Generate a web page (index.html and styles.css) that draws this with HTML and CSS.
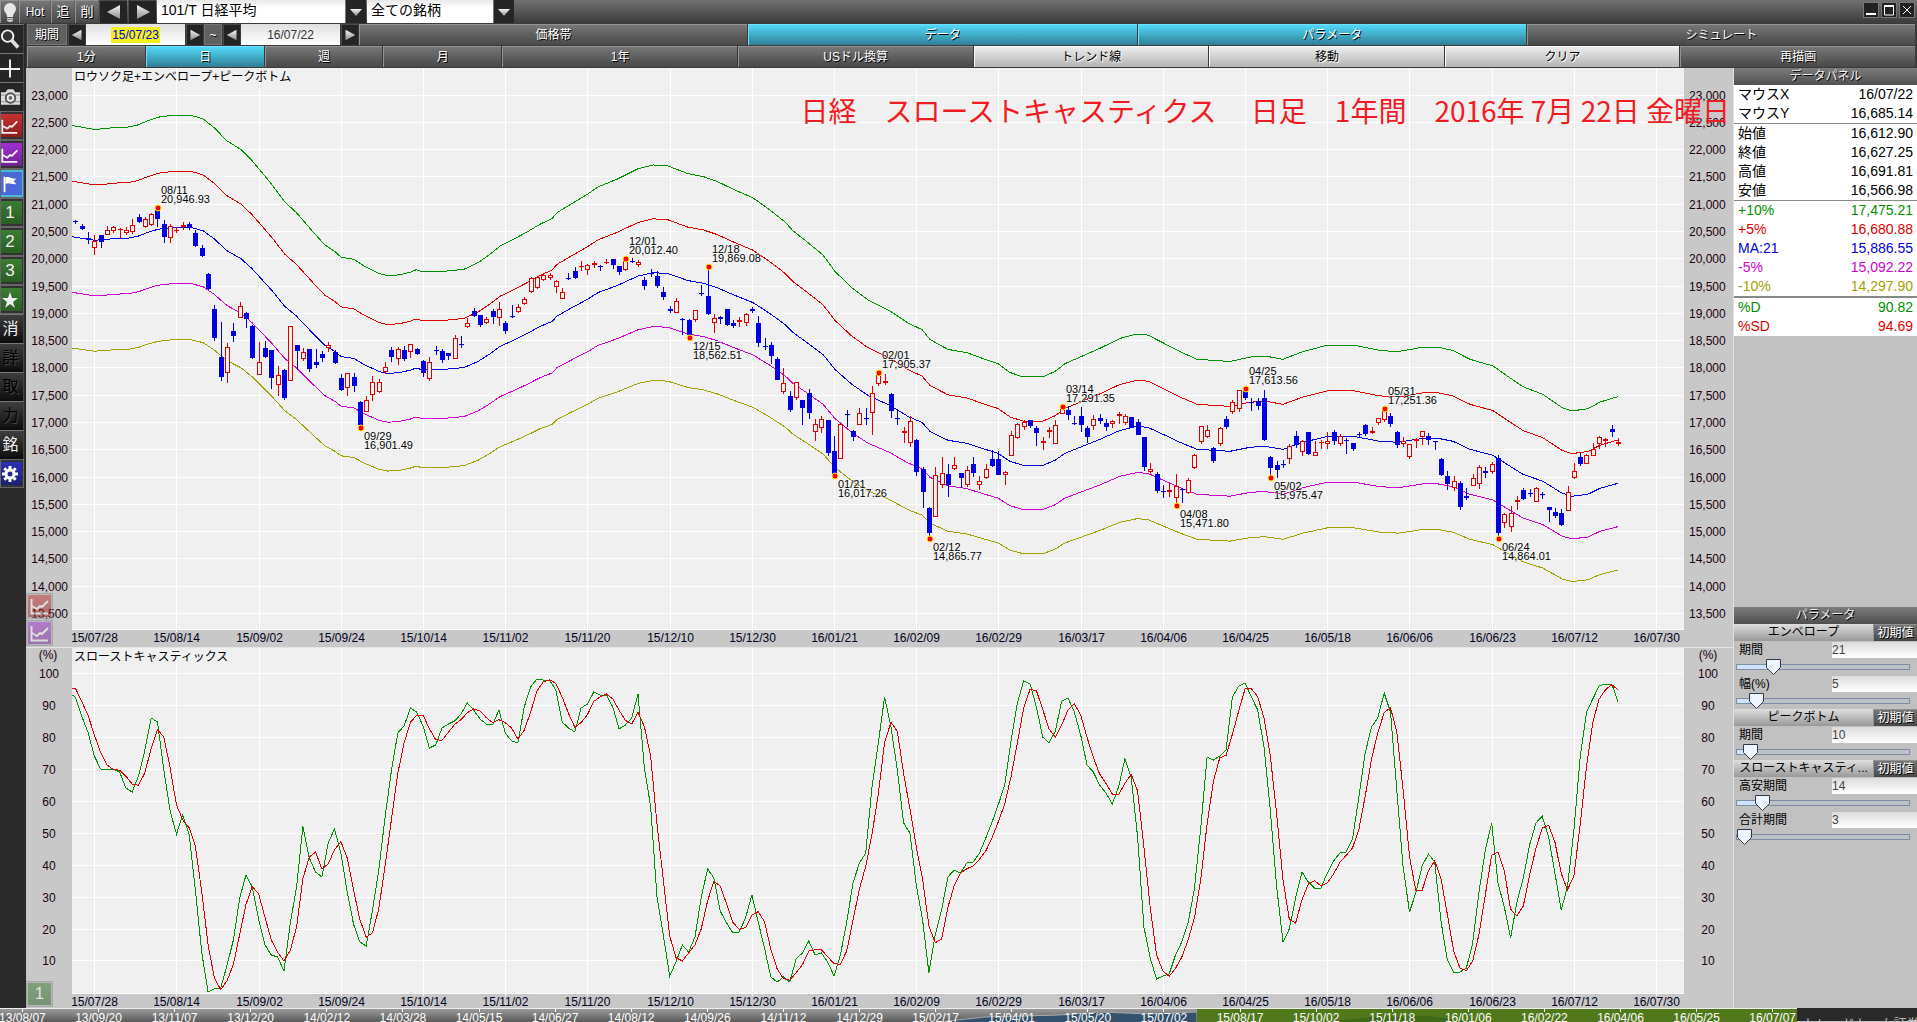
FILE: index.html
```html
<!DOCTYPE html>
<html lang="ja">
<head>
    <meta charset="UTF-8">
    <meta name="viewport" content="width=device-width, initial-scale=1.0">
    <title>101/T 日経平均</title>
    <link rel="stylesheet" href="styles.css">
</head>
<body>

    <!-- shared icon shapes -->
    <svg class="defs" width="0" height="0" aria-hidden="true">
        <defs>
            <linearGradient id="metal" x1="0" y1="0" x2="0" y2="1">
                <stop offset="0" stop-color="#f4f4f4"/>
                <stop offset="1" stop-color="#8c8c8c"/>
            </linearGradient>
            <symbol id="left" viewBox="0 0 16 16"><path d="M14 1v14L1 8z" fill="url(#metal)"/></symbol>
            <symbol id="right" viewBox="0 0 16 16"><path d="M2 1v14L15 8z" fill="url(#metal)"/></symbol>
            <symbol id="line" viewBox="0 0 22 22">
                <path d="M2.500 4v14.500H19" fill="none" stroke="#f2f2f2" stroke-width="2"/>
                <path d="M3 11l5 3 3-3 2 1 6-6" fill="none" stroke="#f2f2f2" stroke-width="2"/>
            </symbol>
        </defs>
    </svg>

    <header class="topbar">
        <button class="btn bulb" aria-label="ヒント">
            <svg width="16" height="22" viewBox="0 0 16 22"><path d="M8 2a6 6 0 0 0-6 6c0 3 3 4 3 8h6c0-4 3-5 3-8a6 6 0 0 0-6-6z" fill="#e6e6e6"/><path d="M5 17h6v3l-2 1H7l-2-1z" fill="#c9c9c9"/><path d="M5 18.500h6" stroke="#888"/></svg>
        </button>
        <button class="btn hot">Hot</button>
        <button class="btn kanji">追</button>
        <button class="btn kanji">削</button>
        <button class="btn dark nav" aria-label="前の銘柄"><svg width="16" height="16"><use href="#left"/></svg></button>
        <button class="btn dark nav" aria-label="次の銘柄"><svg width="16" height="16"><use href="#right"/></svg></button>
        <div class="combo symbol">
            <select aria-label="銘柄"><option>101/T 日経平均</option></select>
            <span class="arrow"><svg width="12" height="8" viewBox="0 0 12 8"><path d="M0 1h12L6 8z" fill="url(#metal)"/></svg></span>
        </div>
        <div class="combo group">
            <select aria-label="グループ"><option>全ての銘柄</option></select>
            <span class="arrow"><svg width="12" height="8" viewBox="0 0 12 8"><path d="M0 1h12L6 8z" fill="url(#metal)"/></svg></span>
        </div>
        <div class="window-buttons">
            <button aria-label="最小化"><svg width="14" height="14"><path d="M2 11h10" stroke="#fff" stroke-width="2"/></svg></button>
            <button aria-label="最大化"><svg width="14" height="14"><path d="M2.500 3v9h9V3z" fill="none" stroke="#fff"/><path d="M2 3h10" stroke="#fff" stroke-width="2"/></svg></button>
            <button aria-label="閉じる"><svg width="14" height="14"><path d="M3 3l8 8M11 3l-8 8" stroke="#fff"/></svg></button>
        </div>
    </header>

    <div class="app">
        <nav class="sidebar">
            <button aria-label="検索"><svg width="22" height="24" viewBox="0 0 22 24"><circle cx="8" cy="9" r="6" fill="#333" stroke="#eee" stroke-width="2"/><path d="M12 13l7 8" stroke="#ddd" stroke-width="4"/></svg></button>
            <button aria-label="十字線"><svg width="22" height="24" viewBox="0 0 22 24"><path d="M10.500 3v19M0 13h21" stroke="#f4f4f4" stroke-width="2"/></svg></button>
            <button aria-label="カメラ"><svg width="22" height="24" viewBox="0 0 22 24"><path d="M1 7h5l2-3h6l2 3h5v13H1z" fill="#ddd"/><path d="M1 10h20M1 17h20" stroke="#888"/><circle cx="11" cy="13" r="5" fill="#eee" stroke="#555" stroke-width="2"/><circle cx="11" cy="13" r="2" fill="#666"/></svg></button>
            <button class="tile red" aria-label="チャート1"><svg width="22" height="22"><use href="#line"/></svg></button>
            <button class="tile purple" aria-label="チャート2"><svg width="22" height="22"><use href="#line"/></svg></button>
            <button class="tile flag" aria-label="フラグ"><svg width="22" height="22" viewBox="0 0 22 22"><path d="M5 3v17" stroke="#fff" stroke-width="2"/><path d="M6 4c4-2 6 2 12 1l-3 3 3 3c-5 1-8-2-12 0z" fill="#fff"/></svg></button>
            <button class="tile green">1</button>
            <button class="tile green">2</button>
            <button class="tile green">3</button>
            <button class="tile green" aria-label="お気に入り"><svg width="18" height="18" viewBox="0 0 18 18"><path d="M9 1l2 6h6l-5 4 2 6-5-4-5 4 2-6-5-4h6z" fill="#eee"/></svg></button>
            <button class="char">消</button>
            <button class="char" disabled>詳</button>
            <button class="char" disabled>取</button>
            <button class="char" disabled>力</button>
            <button class="char">銘</button>
            <button class="tile navy" aria-label="設定"><svg width="20" height="20" viewBox="0 0 20 20"><circle cx="10" cy="10" r="4" fill="none" stroke="#fff" stroke-width="3"/><path d="M10 2v3M10 15v3M2 10h3M15 10h3M4.300 4.300l2 2M13.700 13.700l2 2M15.700 4.300l-2 2M6.300 13.700l-2 2" stroke="#fff" stroke-width="3"/></svg></button>
        </nav>

        <div class="main">
            <div class="bar">
                <span class="caption">期間</span>
                <button class="btn dark step" aria-label="開始日を戻す"><svg width="12" height="12"><use href="#left"/></svg></button>
                <div class="date selected"><input type="text" size="8" value="15/07/23" aria-label="開始日"></div>
                <button class="btn dark step" aria-label="開始日を進める"><svg width="12" height="12"><use href="#right"/></svg></button>
                <span class="caption tilde">~</span>
                <button class="btn dark step" aria-label="終了日を戻す"><svg width="12" height="12"><use href="#left"/></svg></button>
                <div class="date"><input type="text" size="8" value="16/07/22" aria-label="終了日"></div>
                <button class="btn dark step" aria-label="終了日を進める"><svg width="12" height="12"><use href="#right"/></svg></button>
                <button class="btn grow">価格帯</button>
                <button class="btn grow on">データ</button>
                <button class="btn grow on">パラメータ</button>
                <button class="btn grow">シミュレート</button>
            </div>
            <div class="bar">
                <button class="btn grow">1分</button>
                <button class="btn grow on">日</button>
                <button class="btn grow">週</button>
                <button class="btn grow">月</button>
                <button class="btn wide">1年</button>
                <button class="btn wide">USドル換算</button>
                <button class="btn wide light">トレンド線</button>
                <button class="btn wide light">移動</button>
                <button class="btn wide light">クリア</button>
                <button class="btn wide">再描画</button>
            </div>

            <div class="work">
                <div class="charts">
                    <section class="chart price">
                        <svg id="priceChart" role="img" aria-label="日経平均 ロウソク足"></svg>
                        <div class="float">
                            <button class="tile red" aria-label="チャート1"><svg width="22" height="22"><use href="#line"/></svg></button>
                            <button class="tile purple" aria-label="チャート2"><svg width="22" height="22"><use href="#line"/></svg></button>
                        </div>
                    </section>
                    <section class="chart stoch">
                        <svg id="stochChart" role="img" aria-label="スローストキャスティックス"></svg>
                        <div class="float">
                            <button class="tile green">1</button>
                        </div>
                    </section>
                    <h1 class="note">日経　スローストキャスティクス　 日足　1年間　2016年 7月 22日 金曜日</h1>
                </div>

                <aside class="panels">
                    <h2>データパネル</h2>
                    <table class="data">
                        <tbody>
                            <tr><th>マウスX</th><td>16/07/22</td></tr>
                            <tr><th>マウスY</th><td>16,685.14</td></tr>
                        </tbody>
                        <tbody>
                            <tr><th>始値</th><td>16,612.90</td></tr>
                            <tr><th>終値</th><td>16,627.25</td></tr>
                            <tr><th>高値</th><td>16,691.81</td></tr>
                            <tr><th>安値</th><td>16,566.98</td></tr>
                        </tbody>
                        <tbody>
                            <tr class="c-green"><th>+10%</th><td>17,475.21</td></tr>
                            <tr class="c-red"><th>+5%</th><td>16,680.88</td></tr>
                            <tr class="c-blue"><th>MA:21</th><td>15,886.55</td></tr>
                            <tr class="c-magenta"><th>-5%</th><td>15,092.22</td></tr>
                            <tr class="c-olive"><th>-10%</th><td>14,297.90</td></tr>
                        </tbody>
                        <tbody>
                            <tr class="c-green"><th>%D</th><td>90.82</td></tr>
                            <tr class="c-red"><th>%SD</th><td>94.69</td></tr>
                        </tbody>
                    </table>

                    <form class="params">
                        <h2>パラメータ</h2>
                        <div class="group-head"><h3>エンベロープ</h3><button type="button" class="btn reset">初期値</button></div>
                        <div class="param">
                            <label for="envTerm">期間</label><input type="text" id="envTerm" value="21">
                            <input type="range" min="3" max="100" value="21" aria-label="エンベロープ 期間">
                        </div>
                        <div class="param">
                            <label for="envWidth">幅(%)</label><input type="text" id="envWidth" value="5">
                            <input type="range" min="1" max="55" value="5" aria-label="エンベロープ 幅">
                        </div>
                        <div class="group-head"><h3>ピークボトム</h3><button type="button" class="btn reset">初期値</button></div>
                        <div class="param">
                            <label for="peakTerm">期間</label><input type="text" id="peakTerm" value="10">
                            <input type="range" min="2" max="200" value="10" aria-label="ピークボトム 期間">
                        </div>
                        <div class="group-head"><h3>スローストキャスティ...</h3><button type="button" class="btn reset">初期値</button></div>
                        <div class="param">
                            <label for="hlTerm">高安期間</label><input type="text" id="hlTerm" value="14">
                            <input type="range" min="3" max="100" value="14" aria-label="高安期間">
                        </div>
                        <div class="param">
                            <label for="sumTerm">合計期間</label><input type="text" id="sumTerm" value="3">
                            <input type="range" min="3" max="100" value="3" aria-label="合計期間">
                        </div>
                    </form>
                </aside>
            </div>
        </div>
    </div>

    <footer class="overview">
        <svg id="overviewChart" role="img" aria-label="全期間"></svg>
        <div class="brand">トレードトーム証券</div>
    </footer>

    <script src="chart.js"></script>
</body>
</html>
```

FILE: styles.css
```css
* {
    box-sizing: border-box;
}

body {
    margin: 0;
    height: 100vh;
    display: flex;
    flex-direction: column;
    overflow: hidden;
    background: #2a2a2a;
    font-family: "Liberation Sans", "Noto Sans CJK JP", sans-serif;
    font-size: 12px;
    line-height: 16px;
}

h1, h2, h3 {
    margin: 0;
    font-weight: normal;
}

button, input, select {
    font: inherit;
    margin: 0;
    padding: 0;
    border: none;
    border-radius: 0;
}

.defs {
    position: absolute;
}

/* buttons */

.btn {
    display: flex;
    align-items: center;
    justify-content: center;
    min-width: 0;
    color: #fff;
    text-shadow: 1px 1px 0 #000;
    background: linear-gradient(#777, #484848);
    border-top: 1px solid #929292;
    border-left: 1px solid #929292;
    white-space: nowrap;
}

.btn.on {
    background: linear-gradient(#52d8f8, #2f7f94);
    border-color: #6fe0fa;
}

.btn.light {
    color: #000;
    text-shadow: 1px 1px 0 #fff;
    background: linear-gradient(#ececec, #b4b4b4);
    border-color: #fafafa;
}

.btn.dark {
    background: #242424;
    border-color: #4a4a4a;
}

/* top bar */

.topbar {
    flex: none;
    height: 24px;
    display: flex;
    gap: 1px;
    padding-bottom: 1px;
    background: linear-gradient(#707070, #3a3a3a);
}

.bulb {
    width: 18px;
}

.hot {
    width: 31px;
    font-size: 12px;
}

.kanji {
    width: 23px;
    font-size: 13px;
}

.nav {
    width: 28px;
}

.combo {
    display: grid;
    grid-template-columns: 1fr 21px;
}

.combo select {
    grid-area: 1 / 1 / 2 / 3;
    appearance: none;
    padding: 0 4px 4px;
    font-size: 14px;
    color: #000;
    background: linear-gradient(#e8e8e8, #fff 8px);
}

.combo .arrow {
    grid-area: 1 / 2 / 2 / 3;
    display: flex;
    align-items: center;
    justify-content: center;
    background: #262626;
    border-left: 1px solid #777;
    pointer-events: none;
}

.symbol {
    width: 209px;
}

.group {
    width: 147px;
}

.window-buttons {
    display: flex;
    gap: 2px;
    margin-left: auto;
    padding: 2px 2px 5px;
}

.window-buttons button {
    display: flex;
    align-items: center;
    justify-content: center;
    width: 16px;
    background: #222;
    border: 1px solid #777;
}

/* layout */

.app {
    flex: 1;
    min-height: 0;
    display: flex;
}

.main {
    flex: 1;
    min-width: 0;
    display: flex;
    flex-direction: column;
}

.work {
    flex: 1;
    min-height: 0;
    display: flex;
}

/* side bar */

.sidebar {
    flex: none;
    width: 26px;
    padding-right: 2px;
    background: #2a2a2a;
}

.sidebar button {
    display: flex;
    align-items: center;
    justify-content: center;
    width: 100%;
    height: 29px;
    padding: 0 2px 0 0;
    color: #eee;
    font-size: 17px;
    background: #262626;
    border-top: 1px solid #777;
    border-right: 1px solid #444;
}

.sidebar .tile {
    border: 2px solid #333;
    border-width: 3px 2px 3px 0;
    outline: 1px solid #666;
    outline-offset: -1px;
}

.sidebar .tile.red, .float .tile.red {
    background: linear-gradient(#c83030, #8c1c1c);
}

.sidebar .tile.purple, .float .tile.purple {
    background: linear-gradient(#a030d0, #6c2492);
}

.sidebar .tile.flag {
    background: #4a68d8;
    border-color: #46bcd8;
}

.sidebar .tile.green, .float .tile.green {
    background: linear-gradient(#3c7c34, #2a5e24);
}

.sidebar .tile.navy {
    background: linear-gradient(#2c30b8, #1c2070);
}

.sidebar .char {
    font-size: 16px;
    background: linear-gradient(#3e3e3e, #0c0c0c);
}

.sidebar .char:disabled {
    color: #000;
    text-shadow: 1px 1px 0 #444;
}

/* tool bars */

.bar {
    flex: none;
    height: 22px;
    display: flex;
    gap: 1px;
    padding: 0 2px 1px 1px;
    background: #3a3a3a;
}

.caption {
    width: 40px;
    line-height: 20px;
    text-align: center;
    color: #fff;
    text-shadow: 1px 1px 0 #000;
    background: #606060;
    border: 1px solid #757575;
}

.caption.tilde {
    width: 18px;
}

.step {
    width: 17px;
}

.date {
    width: 99px;
    display: flex;
    align-items: center;
    justify-content: center;
    background: linear-gradient(#e0e0e0, #fff);
}

.date input {
    width: 49px;
    text-align: center;
    color: #333;
    background: transparent;
}

.date.selected input {
    color: #0000c8;
    background: #f0f020;
}

.grow {
    flex: 1 1 0;
}

.wide {
    flex: 2 1 0;
}

/* charts */

.charts {
    flex: 1;
    min-width: 0;
    display: flex;
    flex-direction: column;
    position: relative;
    background: #c8c8c8;
    border-right: 1px solid #e0e0e0;
}

.chart {
    position: relative;
    min-height: 0;
}

.price {
    flex: 580 1 0;
}

.stoch {
    flex: 360 1 0;
    border-top: 1px solid #e4e4e4;
}

.chart > svg {
    display: block;
    width: 100%;
    height: 100%;
}

.note {
    position: absolute;
    top: 24px;
    right: 3px;
    color: #f01c24;
    font-family: "Noto Sans CJK JP", sans-serif;
    font-size: 28px;
    line-height: 36px;
    white-space: nowrap;
}

.float {
    position: absolute;
    left: 0;
    bottom: 1px;
    display: flex;
    flex-direction: column;
    gap: 1px;
    opacity: 0.5;
}

.float .tile {
    display: flex;
    align-items: center;
    justify-content: center;
    width: 27px;
    height: 26px;
    color: #fff;
    font-size: 16px;
    border: 2px solid #aaa;
    outline: 1px solid #888;
    outline-offset: -1px;
}

.plot {
    fill: #f0f0f0;
}

.grid {
    stroke: #fff;
    shape-rendering: crispEdges;
}

.curve {
    fill: none;
    stroke-width: 1;
}

.axis {
    fill: #200010;
    font-size: 12px;
}

.dates {
    fill: #000020;
    text-anchor: middle;
}

.title {
    fill: #000;
    font-size: 12px;
}

.mark {
    fill: #000;
    font-size: 11px;
    stroke: #f8f8f8;
    stroke-width: 1px;
    paint-order: stroke;
}

.peak {
    fill: #f00;
    stroke: #ffe800;
    stroke-width: 1px;
}

.up {
    fill: #f0f0f0;
    stroke: #e00000;
}

.down {
    fill: #0000e0;
    stroke: #0000e0;
}

/* right side */

.panels {
    flex: none;
    width: 183px;
    display: flex;
    flex-direction: column;
    background: #c0c0c0;
}

.panels h2 {
    height: 17px;
    font-size: 12px;
    line-height: 17px;
    text-align: center;
    color: #eee;
    text-shadow: 1px 1px 0 #000;
    background: linear-gradient(#7c7c7c, #505050);
}

.data {
    width: 100%;
    border-collapse: collapse;
    background: #fff;
    font-size: 14px;
    line-height: 19px;
}

.data tbody + tbody {
    border-top: 1px solid #888;
}

.data tbody:last-child {
    border-top-width: 2px;
}

.data th {
    padding: 0 0 0 4px;
    font-weight: normal;
    text-align: left;
}

.data td {
    padding: 0 4px 0 0;
    text-align: right;
}

.c-green { color: #009000; }
.c-red { color: #e00000; }
.c-blue { color: #0000e0; }
.c-magenta { color: #d000d0; }
.c-olive { color: #a0a000; }

.params {
    height: 401px;
    margin-top: auto;
}

.group-head {
    display: flex;
    height: 17px;
}

.group-head h3 {
    flex: 1;
    min-width: 0;
    overflow: hidden;
    white-space: nowrap;
    text-align: center;
    font-size: 12px;
    line-height: 17px;
    background: linear-gradient(#dedede, #999);
}

.reset {
    width: 44px;
}

.param {
    display: grid;
    grid-template-columns: 98px 1fr;
    grid-template-rows: 18px 16px;
    align-items: center;
}

.param label {
    padding-left: 5px;
}

.param input[type="text"] {
    width: 100%;
    height: 16px;
    color: #444;
    background: linear-gradient(#dcdcdc, #fff);
}

.param input[type="range"] {
    grid-column: 1 / 3;
    appearance: none;
    height: 16px;
    margin: 0 7px 0 2px;
    background: transparent;
}

.param input[type="range"]::-webkit-slider-runnable-track {
    height: 6px;
    border: 1px solid #7d8ea4;
    background: linear-gradient(90deg, #cfe0fa var(--fill), #bcc2c8 var(--fill));
}

.param input[type="range"]::-webkit-slider-thumb {
    appearance: none;
    width: 15px;
    height: 16px;
    margin-top: -6px;
    background: url("data:image/svg+xml,%3Csvg xmlns='http://www.w3.org/2000/svg' width='15' height='16'%3E%3Cpath d='M.5.5h14v8l-7 7-7-7z' fill='%23eef5ff' stroke='%23333a44'/%3E%3C/svg%3E");
}

/* bottom overview */

.overview {
    flex: none;
    height: 14px;
    display: flex;
    background: #c0c0c0;
}

.overview svg {
    flex: 1;
    min-width: 0;
    height: 14px;
    border-top: 1px solid #eee;
}

.overview .axis {
    fill: #fff;
    text-anchor: middle;
}

.brand {
    width: 120px;
    height: 13px;
    overflow: hidden;
    padding: 8px 0 0 6px;
    color: #bbb;
    font-size: 13px;
    background: #2a2a2a;
    white-space: nowrap;
}
```

FILE: chart.js
```js
// One entry per trading day: direction, high, body top, body bottom, low.
// Levels run downwards on the price drawing scale (68 = top, 630 = bottom).
const candles = `
b220 221 222 224,b224 226 229 230,b232 238 239 244,r235 241 248 255,b235 235 242 248,r226 230 235 235,r226 227 231 233,r228 229 230 238,r227 230 233 235,r219 225 232 234,
b214 217 222 223,r217 219 227 228,r213 214 225 226,b208 210 219 227,b220 224 237 243,r224 226 238 243,r227 230 231 233,r222 225 227 230,b222 224 228 230,b230 233 246 247,
b245 248 256 257,b273 274 289 290,b305 309 338 341,b322 358 378 382,r343 347 374 384,b323 331 336 342,r302 306 318 318,b312 313 319 328,b325 326 359 360,r342 363 376 376,
b341 348 358 359,b351 351 379 390,r367 376 386 397,b370 371 399 401,r326 326 382 382,b345 345 352 371,r348 353 360 362,b349 349 370 373,b350 363 366 369,b352 355 359 363,
r342 345 348 353,b351 353 364 365,b375 379 391 392,r374 374 389 397,b374 378 387 393,b402 403 426 428,r397 401 413 413,r377 383 396 402,r380 383 393 394,r363 368 373 375,
b347 351 358 363,r347 350 360 366,b346 351 360 362,r344 344 353 359,b348 350 355 356,b361 362 374 378,r358 363 380 382,b346 351 352 356,b350 352 361 364,b354 354 357 361,
r335 338 360 360,b336 344 345 348,r318 323 327 328,b308 311 316 317,b315 315 325 327,r317 319 323 324,b309 311 317 324,r302 309 318 326,b321 323 331 334,b305 316 317 318,
r304 307 312 313,r297 299 304 305,r277 278 292 293,r277 277 288 289,r273 275 280 281,r273 275 278 280,r280 281 287 293,r288 292 299 299,b273 278 279 280,b267 271 278 279,
r261 266 267 271,r264 265 270 275,r261 263 265 268,b265 266 267 271,r259 262 263 264,b259 259 265 269,b266 266 272 275,r259 261 270 271,b258 261 262 263,r260 262 265 267,
b277 280 286 290,b269 273 274 277,b271 276 286 288,b287 292 297 300,b306 309 311 313,r298 301 313 313,b318 319 320 335,b319 320 335 337,r310 310 320 322,b285 293 294 296,
b269 296 314 315,r314 318 323 333,b316 317 319 324,b309 309 325 326,b320 323 326 328,r317 320 322 327,r313 314 323 326,b307 309 311 313,b316 323 343 347,b338 346 347 351,
b342 345 357 365,b358 360 381 381,r369 384 393 395,b392 397 411 413,r383 383 399 401,b401 401 409 426,b390 394 414 420,r420 425 433 442,r417 420 429 434,b421 421 454 457,
b437 452 476 477,r424 425 460 460,b411 415 416 428,b431 432 438 442,r409 414 426 426,b409 419 420 426,r387 394 414 436,r375 376 385 387,r375 382 384 386,b394 395 412 419,
b411 419 420 426,r428 432 434 444,r417 422 444 448,b440 441 473 477,b468 470 493 509,b508 509 534 537,r468 476 518 518,r458 474 486 489,b465 475 486 498,r458 466 470 471,
b474 474 479 489,r467 471 486 488,b458 465 474 478,r477 482 486 491,r465 470 479 480,b451 460 467 468,b452 460 476 476,r472 473 476 486,r432 436 457 457,r424 425 439 440,
r421 423 428 431,b421 421 427 429,b427 429 434 447,r438 442 444 451,r428 431 433 439,r421 426 445 445,r408 410 415 415,b407 411 416 421,b417 424 425 426,b408 417 426 433,
b427 429 438 444,r416 420 427 431,b415 419 422 425,b420 424 428 432,r421 422 425 429,r413 415 417 425,r415 417 424 426,b418 418 429 429,b420 423 436 436,b438 438 468 472,
r464 470 473 476,b473 475 492 494,b486 492 493 499,r484 491 493 498,r475 487 499 504,b489 490 491 504,r479 481 494 495,r455 456 469 470,r427 427 443 445,r426 431 438 439,
b448 449 462 464,r428 429 445 447,b417 420 428 430,r401 403 413 415,r391 391 410 413,b391 392 399 401,b399 403 404 412,b399 402 407 411,b391 399 441 442,b457 458 469 477,
b462 466 471 479,b461 465 466 469,r445 447 460 465,b432 437 446 449,r441 442 453 457,b433 433 455 456,r442 453 457 457,r441 443 444 450,r433 442 445 450,b431 433 442 446,
r435 437 445 447,b439 441 442 455,b444 444 450 452,b433 435 436 438,b425 426 435 437,r428 432 434 435,r419 419 424 426,r409 411 421 423,b414 417 425 428,b432 433 446 449,
r438 442 445 448,r445 445 458 460,r439 440 442 449,r432 432 438 446,b434 437 441 446,b442 442 443 451,b459 460 476 477,b472 477 485 491,r477 482 489 492,b482 484 508 511,
b489 497 499 501,r475 479 487 487,r466 468 485 490,b468 472 474 479,r463 465 473 475,b456 459 534 537,r514 515 524 529,r507 514 528 533,r497 501 503 511,b489 491 500 501,
b490 494 495 498,r488 489 503 503,b493 495 496 500,b508 508 511 523,b509 513 517 519,b510 514 526 527,r487 493 512 512,r464 472 479 480,b453 458 465 467,r455 456 465 465,
r444 450 457 457,r437 438 445 450,r439 440 442 448,b426 430 433 438,r439 443 445 447`.trim().split(/,\s*/).map(s => ({
    up: s[0] === "r",
    v: s.slice(1).split(" ").map(Number)
}));

// 21 day moving average: x, level
const average = [
    [72, 237], [84, 239], [94, 240.5], [106, 240], [112, 239], [128, 238.5], [138, 236.5], [147, 233], [158, 229.5], [175, 227.5], [190, 227.5],
    [203, 231], [214, 239], [227, 251], [241, 259], [252, 269], [262, 280], [272, 291], [285, 307], [296, 316], [314, 335], [325, 346],
    [335, 352], [341, 357], [354, 359], [364, 365], [379, 372], [388, 374], [400, 373], [411, 370.5], [416, 368.5], [423, 370.5], [443, 370],
    [464, 368], [478, 362], [489, 355], [500, 347], [514, 340.5], [528, 333.5], [540, 327], [552, 322], [557, 316.5], [572, 308], [587, 300],
    [598, 293], [617, 286], [638, 276.5], [653, 273], [668, 274], [688, 281], [703, 283.5], [717, 288], [733, 295], [753, 303], [770, 314],
    [785, 325], [793, 333], [807, 343], [823, 355], [835, 370], [852, 385], [868, 396], [890, 406], [908, 417], [922, 423], [930, 432],
    [948, 441], [967, 444], [982, 449], [998, 454], [1010, 462], [1023, 466], [1043, 466], [1055, 461], [1065, 454], [1080, 448], [1100, 440],
    [1120, 431], [1137, 427], [1148, 428], [1163, 435], [1180, 443], [1197, 450], [1230, 452], [1250, 448], [1265, 447], [1283, 450],
    [1303, 443], [1328, 437], [1353, 437], [1380, 442], [1398, 443], [1423, 439], [1438, 439], [1453, 442], [1470, 450], [1493, 456],
    [1507, 465], [1523, 475], [1543, 482], [1562, 494], [1572, 497], [1588, 495], [1600, 489], [1618, 484]
];

// %D for each day (648 = top, 993 = bottom); the first two come before the visible range
const percentD = [676, 691,
    697, 716, 732, 756, 769, 770, 769, 772, 788, 792, 776, 750, 718, 722, 770, 811, 834, 815, 834, 890, 953, 992, 989, 988, 965, 940, 898, 875, 887,
    920, 945, 955, 957, 971, 923, 887, 826, 858, 872, 877, 843, 829, 853, 892, 924, 942, 946, 910, 870, 817, 770, 733, 726, 708, 712, 726, 748, 745,
    728, 724, 721, 714, 703, 710, 719, 724, 725, 710, 733, 741, 743, 707, 687, 679, 680, 680, 690, 722, 728, 732, 708, 704, 692, 695, 695, 707, 729,
    725, 718, 694, 768, 807, 897, 935, 976, 962, 945, 952, 937, 897, 869, 878, 911, 923, 933, 932, 918, 895, 922, 948, 977, 982, 977, 982, 959, 953,
    941, 955, 953, 962, 976, 955, 922, 883, 863, 853, 787, 743, 697, 727, 770, 823, 833, 885, 920, 973, 935, 910, 877, 870, 873, 863, 862, 853, 838,
    822, 804, 785, 740, 703, 681, 684, 707, 737, 743, 731, 701, 698, 712, 735, 765, 772, 785, 793, 804, 787, 759, 777, 837, 927, 958, 979, 976, 974,
    955, 942, 923, 888, 827, 757, 760, 756, 750, 697, 686, 683, 697, 710, 747, 810, 887, 942, 929, 898, 872, 882, 888, 888, 873, 861, 853, 852, 839,
    797, 753, 727, 718, 693, 712, 790, 867, 912, 893, 866, 854, 862, 922, 960, 972, 972, 968, 943, 892, 850, 823, 883, 907, 938, 902, 878, 845, 823,
    816, 837, 873, 910, 887, 830, 757, 712, 699, 686, 684, 684, 702];

// day index, level, 1 = peak / 0 = bottom, date, price
const peaks = [
    [13, 208, 1, "08/11", "20,946.93"], [45, 429, 0, "09/29", "16,901.49"], [87, 259, 1, "12/01", "20,012.40"], [97, 338, 0, "12/15", "18,562.51"],
    [100, 267, 1, "12/18", "19,869.08"], [120, 477, 0, "01/21", "16,017.26"], [127, 374, 1, "02/01", "17,905.37"], [135, 540, 0, "02/12", "14,865.77"],
    [156, 408, 1, "03/14", "17,291.35"], [174, 507, 0, "04/08", "15,471.80"], [185, 390, 1, "04/25", "17,613.56"], [189, 479, 0, "05/02", "15,975.47"],
    [207, 410, 1, "05/31", "17,251.36"], [225, 540, 0, "06/24", "14,864.01"]
];

const dates = "15/07/28 15/08/14 15/09/02 15/09/24 15/10/14 15/11/02 15/11/20 15/12/10 15/12/30 16/01/21 16/02/09 16/02/29 16/03/17 16/04/06 16/04/25 16/05/18 16/06/06 16/06/23 16/07/12 16/07/30".split(" ");
const allDates = "13/08/07 13/09/20 13/11/07 13/12/20 14/02/12 14/03/28 14/05/15 14/06/27 14/08/12 14/09/26 14/11/12 14/12/29 15/02/17 15/04/01 15/05/20 15/07/02 15/08/17 15/10/02 15/11/18 16/01/06 16/02/22 16/04/06 16/05/25 16/07/07".split(" ");

const LEFT = 46;
const RIGHT = 49;
const dayX = i => 75.3 + 6.323 * i;

// level <-> price
const toPrice = y => 23000 - (y - 94.7) * 18.295;
const toLevel = p => 94.7 + (23000 - p) / 18.295;

function frame(svg, top, bottom, axisHeight) {
    const w = svg.clientWidth;
    const h = svg.clientHeight;
    const pw = w - LEFT - RIGHT;
    const ph = h - axisHeight;
    const x = v => LEFT + (v - 72) / 1612 * pw;
    const y = v => (v - top) / (bottom - top) * ph;
    let out = `<rect class="plot" x="${LEFT}" y="0" width="${pw}" height="${ph}"/>`;
    dates.forEach((d, k) => {
        const gx = Math.round(x(dayX(3 + 13 * k))) + 0.5;
        out += `<path class="grid" d="M${gx} 0V${ph + 3}"/>`;
        out += `<text class="axis dates" x="${gx}" y="${ph + 13}">${d}</text>`;
    });
    out += `<path class="grid" d="M${LEFT} ${ph + 0.5}H${LEFT + pw}"/>`;
    return { w, pw, ph, x, y, out };
}

function gridLine(f, level) {
    const gy = Math.round(f.y(level)) + 0.5;
    return `<path class="grid" d="M${LEFT} ${gy}H${LEFT + f.pw}"/>`;
}

function curve(f, points, color) {
    const d = points.map(p => f.x(p[0]).toFixed(1) + " " + f.y(p[1]).toFixed(1)).join("L");
    return `<path class="curve" stroke="${color}" shape-rendering="crispEdges" d="M${d}"/>`;
}

function drawPrice() {
    const svg = document.getElementById("priceChart");
    const f = frame(svg, 68, 630, 18);
    let out = f.out;

    for (let p = 23000; p >= 13500; p -= 500) {
        const level = toLevel(p);
        out += gridLine(f, level);
        out += `<text class="axis" text-anchor="end" x="${LEFT - 4}" y="${f.y(level) + 5}">${p.toLocaleString("en-US")}</text>`;
        out += `<text class="axis" x="${LEFT + f.pw + 5}" y="${f.y(level) + 5}">${p.toLocaleString("en-US")}</text>`;
    }

    [[1.1, "#009000"], [1.05, "#e00000"], [1, "#0000e0"], [0.95, "#d000d0"], [0.9, "#a0a000"]].forEach(([rate, color]) => {
        out += curve(f, average.map(([x, y]) => [x, toLevel(toPrice(y) * rate)]), color);
    });

    candles.forEach((c, i) => {
        const cx = Math.round(f.x(dayX(i)));
        const [high, top, bottom, low] = c.v.map(v => Math.round(f.y(v)));
        out += `<g class="${c.up ? "up" : "down"}"><path d="M${cx + 0.5} ${high}V${low}"/>`;
        out += `<rect x="${cx - 1.5}" y="${top + 0.5}" width="4" height="${Math.max(bottom - top - 1, 0.1)}"/></g>`;
    });

    peaks.forEach(([i, level, peak, date, price]) => {
        const px = Math.round(f.x(dayX(i))) + 1;
        const py = Math.round(f.y(level));
        const base = peak ? py - 14 : py + 12;
        out += `<circle class="peak" cx="${px}" cy="${py}" r="3"/>`;
        out += `<text class="mark" x="${px + 3}" y="${base}">${date}</text>`;
        out += `<text class="mark" x="${px + 3}" y="${base + 9}">${price}</text>`;
    });

    out += `<text class="title" x="${LEFT + 2}" y="13">ロウソク足+エンベロープ+ピークボトム</text>`;
    svg.innerHTML = out;
}

function drawStoch() {
    const svg = document.getElementById("stochChart");
    const f = frame(svg, 648, 993, 15);
    let out = f.out;
    const rightX = LEFT + f.pw + 24;

    for (let v = 100; v >= 10; v -= 10) {
        const level = 673.3 + (100 - v) * 3.19;
        out += gridLine(f, level);
        out += `<text class="axis" text-anchor="middle" x="23" y="${f.y(level) + 5}">${v}</text>`;
        out += `<text class="axis" text-anchor="middle" x="${rightX}" y="${f.y(level) + 5}">${v}</text>`;
    }
    out += `<text class="axis" text-anchor="middle" x="22" y="11">(%)</text>`;
    out += `<text class="axis" text-anchor="middle" x="${rightX}" y="11">(%)</text>`;

    const d = percentD.slice(2).map((v, i) => [dayX(i), v]);
    // %SD is the 3 day mean of %D
    const sd = d.map((p, i) => [p[0], (percentD[i] + percentD[i + 1] + percentD[i + 2]) / 3]);
    out += curve(f, [[72, 695], ...d], "#009000");
    out += curve(f, [[72, 688], ...sd], "#e00000");

    out += `<text class="title" x="${LEFT + 2}" y="13">スローストキャスティックス</text>`;
    svg.innerHTML = out;
}

function drawOverview() {
    const svg = document.getElementById("overviewChart");
    const w = svg.clientWidth;
    const x = v => v / 1797 * w;
    let out = `<defs><linearGradient id="strip" x1="0" y1="0" x2="0" y2="1"><stop offset="0" stop-color="#9a9a9a"/><stop offset="1" stop-color="#555"/></linearGradient></defs>`;
    out += `<rect width="${w}" height="14" fill="url(#strip)"/>`;
    out += `<path d="M${x(930)} 14L${x(985)} 8L${x(1060)} 6L${x(1100)} 3L${x(1150)} 5L${x(1197)} 3V14z" fill="#34506a" stroke="#aaa"/>`;
    out += `<rect x="${x(1197)}" width="${x(600)}" height="14" fill="#52781c"/>`;
    out += `<path d="M${x(1320)} 14L${x(1370)} 8L${x(1430)} 7L${x(1480)} 14z" fill="#3e6a18"/>`;
    allDates.forEach((d, k) => {
        const tx = x(22.4 + 76.1 * k);
        out += `<path class="grid" d="M${tx} 0V3"/><text class="axis" x="${tx}" y="13">${d}</text>`;
    });
    svg.innerHTML = out;
}

function drawAll() {
    drawPrice();
    drawStoch();
    drawOverview();
}

document.querySelectorAll("input[type=range]").forEach(input => {
    const update = () => {
        input.style.setProperty("--fill", (input.value - input.min) / (input.max - input.min) * 92 + 4 + "%");
    };
    input.addEventListener("input", update);
    update();
});

window.addEventListener("resize", drawAll);
drawAll();
```
